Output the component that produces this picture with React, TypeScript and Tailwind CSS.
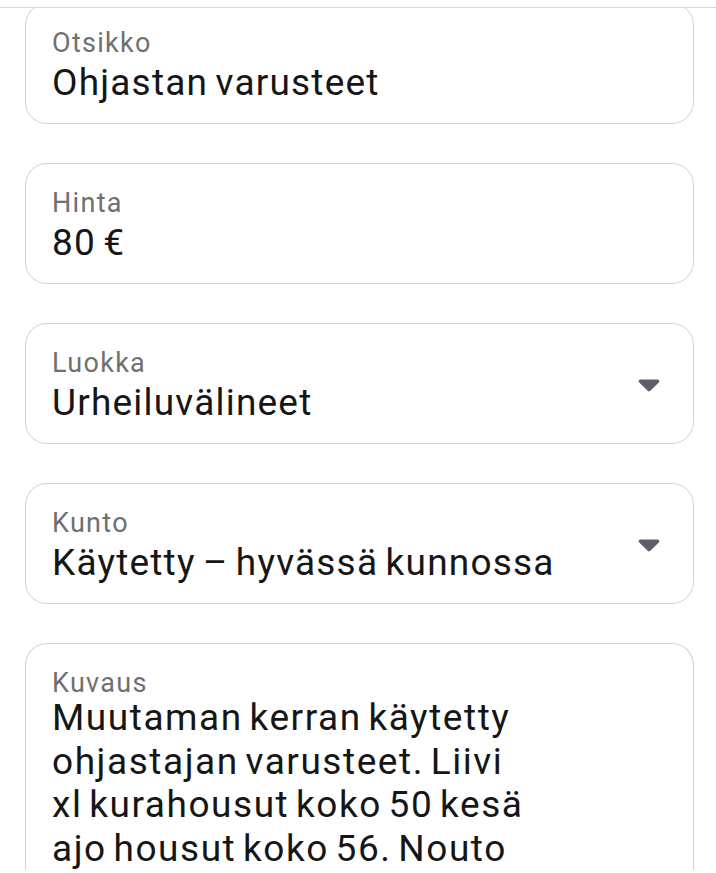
import type { ReactNode } from 'react'

interface FieldProps {
  label: string
  children: ReactNode
  select?: boolean
}

function CaretDown() {
  return (
    <svg width="24" height="16" viewBox="0 0 24 16" className="shrink-0">
      <path
        d="M3.5 2.5h17c1.6 0 2.4 1.9 1.3 3l-8.5 8.2c-.7.7-1.9.7-2.6 0L2.2 5.5c-1.1-1.1-.3-3 1.3-3z"
        fill="#5b6067"
      />
    </svg>
  )
}

function Field({ label, children, select = false }: FieldProps) {
  return (
    <div className="flex h-[121px] items-start rounded-[22px] border border-[#d2d2d2] bg-white pl-[26px] pr-[32px] pt-[23px]">
      <div className="min-w-0 flex-1">
        <div className="text-[27px] leading-[32px] tracking-[1.3px] text-[#707070]">{label}</div>
        <div className="mt-[2px] text-[37px] leading-[44px] tracking-[1.2px] [word-spacing:-3px] text-[#161616]">
          {children}
        </div>
      </div>
      {select ? (
        <div className="flex h-[75px] items-center">
          <CaretDown />
        </div>
      ) : null}
    </div>
  )
}

const descriptionLines = [
  'Muutaman kerran käytetty',
  'ohjastajan varusteet. Liivi',
  'xl kurahousut koko 50 kesä',
  'ajo housut koko 56. Nouto',
]

export default function App() {
  return (
    <div
      className="relative h-[873px] w-full overflow-hidden bg-white"
      style={{ fontFamily: 'Roboto, "Noto Sans", sans-serif' }}
    >
      <div className="relative z-10 h-[8px] border-b border-[#d6d6d6] bg-white" />

      <div className="-mt-[5px] flex flex-col gap-[39px] px-[25px] pr-[22px]">
        <Field label="Otsikko">Ohjastan varusteet</Field>
        <Field label="Hinta">80 €</Field>
        <Field label="Luokka" select>
          Urheiluvälineet
        </Field>
        <Field label="Kunto" select>
          Käytetty – hyvässä kunnossa
        </Field>

        <div className="rounded-t-[22px] border border-b-0 border-[#d2d2d2] bg-white pl-[26px] pr-[32px] pt-[23px]">
          <div className="text-[27px] leading-[32px] tracking-[1.3px] text-[#707070]">Kuvaus</div>
          <div className="-mt-[3px] text-[37px] leading-[43.5px] tracking-[1.55px] [word-spacing:-4px] text-[#161616]">
            {descriptionLines.map((line) => (
              <div key={line}>{line}</div>
            ))}
          </div>
        </div>
      </div>
    </div>
  )
}
